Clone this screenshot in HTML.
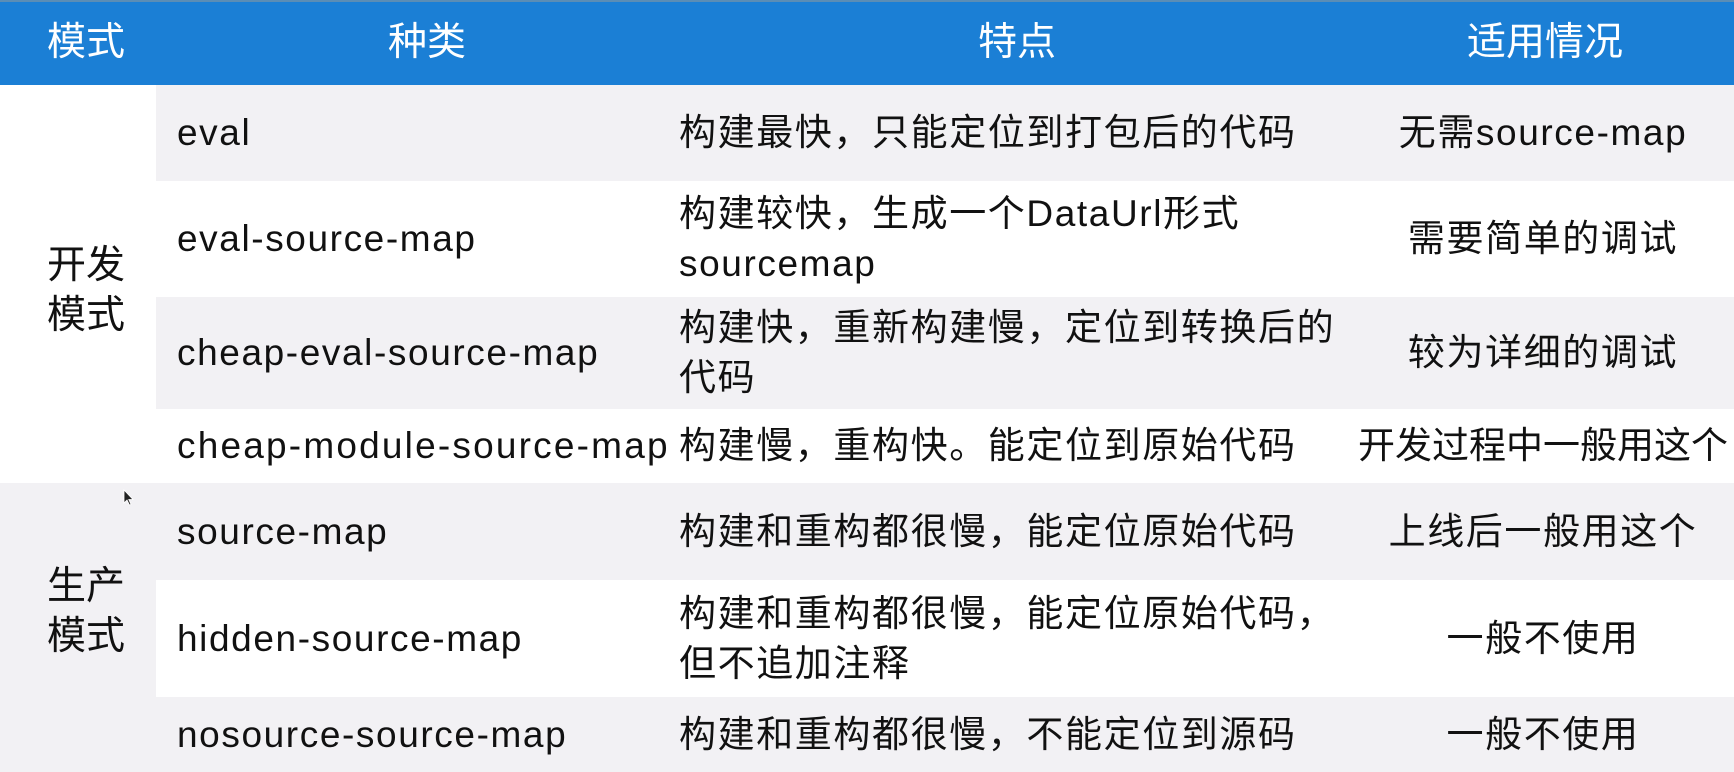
<!DOCTYPE html>
<html><head><meta charset="utf-8"><style>
*{margin:0;padding:0;box-sizing:border-box}
body{width:1734px;height:772px;overflow:hidden;background:#fff;position:relative;font-family:"Liberation Sans","Noto Sans CJK SC",sans-serif;color:#111}
.hd{position:absolute;left:0;top:0;width:1734px;height:85px;background:#1b7fd5;border-top:2px solid #5b8db5}
.h{position:absolute;top:0;height:85px;line-height:85px;color:#fff;font-size:39px;letter-spacing:0px;transform:translateX(-50%);white-space:nowrap}
.g{position:absolute;background:#f2f1f4}
.c{position:absolute;display:flex;align-items:center;font-size:37px;letter-spacing:1.6px;line-height:50px;white-space:nowrap}
.cc{justify-content:center}
.m{position:absolute;left:0;width:172px;display:flex;align-items:center;justify-content:center;font-size:39px;line-height:50px;text-align:center}
</style></head><body>
<div class="hd"></div>
<div class="h" style="left:86px">模式</div>
<div class="h" style="left:427px">种类</div>
<div class="h" style="left:1017px">特点</div>
<div class="h" style="left:1545px">适用情况</div>

<div class="g" style="left:156px;top:85px;width:1578px;height:96px"></div>
<div class="g" style="left:156px;top:297px;width:1578px;height:112px"></div>
<div class="g" style="left:0;top:483px;width:1734px;height:97px"></div>
<div class="g" style="left:0;top:580px;width:156px;height:117px"></div>
<div class="g" style="left:0;top:697px;width:1734px;height:75px"></div>

<div class="m" style="top:177px;height:228px">开发<br>模式</div>
<div class="m" style="top:553px;height:117px">生产<br>模式</div>

<div class="c" style="left:177px;top:85px;height:96px">eval</div>
<div class="c" style="left:679px;top:85px;height:96px">构建最快，只能定位到打包后的代码</div>
<div class="c cc" style="left:1352px;width:382px;top:85px;height:96px">无需source-map</div>

<div class="c" style="left:177px;top:181px;height:116px">eval-source-map</div>
<div class="c" style="left:679px;top:181px;height:116px">构建较快，生成一个DataUrl形式<br>sourcemap</div>
<div class="c cc" style="left:1352px;width:382px;top:181px;height:116px">需要简单的调试</div>

<div class="c" style="left:177px;top:297px;height:112px">cheap-eval-source-map</div>
<div class="c" style="left:679px;top:297px;height:112px">构建快，重新构建慢，定位到转换后的<br>代码</div>
<div class="c cc" style="left:1352px;width:382px;top:297px;height:112px">较为详细的调试</div>

<div class="c" style="left:177px;top:409px;height:74px;letter-spacing:2.2px">cheap-module-source-map</div>
<div class="c" style="left:679px;top:409px;height:74px">构建慢，重构快。能定位到原始代码</div>
<div class="c cc" style="left:1352px;width:382px;top:409px;height:74px;letter-spacing:0px">开发过程中一般用这个</div>

<div class="c" style="left:177px;top:483px;height:97px">source-map</div>
<div class="c" style="left:679px;top:483px;height:97px">构建和重构都很慢，能定位原始代码</div>
<div class="c cc" style="left:1352px;width:382px;top:483px;height:97px">上线后一般用这个</div>

<div class="c" style="left:177px;top:580px;height:117px">hidden-source-map</div>
<div class="c" style="left:679px;top:580px;height:117px">构建和重构都很慢，能定位原始代码，<br>但不追加注释</div>
<div class="c cc" style="left:1352px;width:382px;top:580px;height:117px">一般不使用</div>

<div class="c" style="left:177px;top:697px;height:75px">nosource-source-map</div>
<div class="c" style="left:679px;top:697px;height:75px">构建和重构都很慢，不能定位到源码</div>
<div class="c cc" style="left:1352px;width:382px;top:697px;height:75px">一般不使用</div>

<svg style="position:absolute;left:123px;top:489px" width="12" height="18" viewBox="0 0 12 18"><path d="M1 1 L1 14 L4 11 L6.5 16 L8 15.3 L5.8 10.5 L10 10.5 Z" fill="#222" stroke="#fff" stroke-width="0.8"/></svg>
</body></html>
